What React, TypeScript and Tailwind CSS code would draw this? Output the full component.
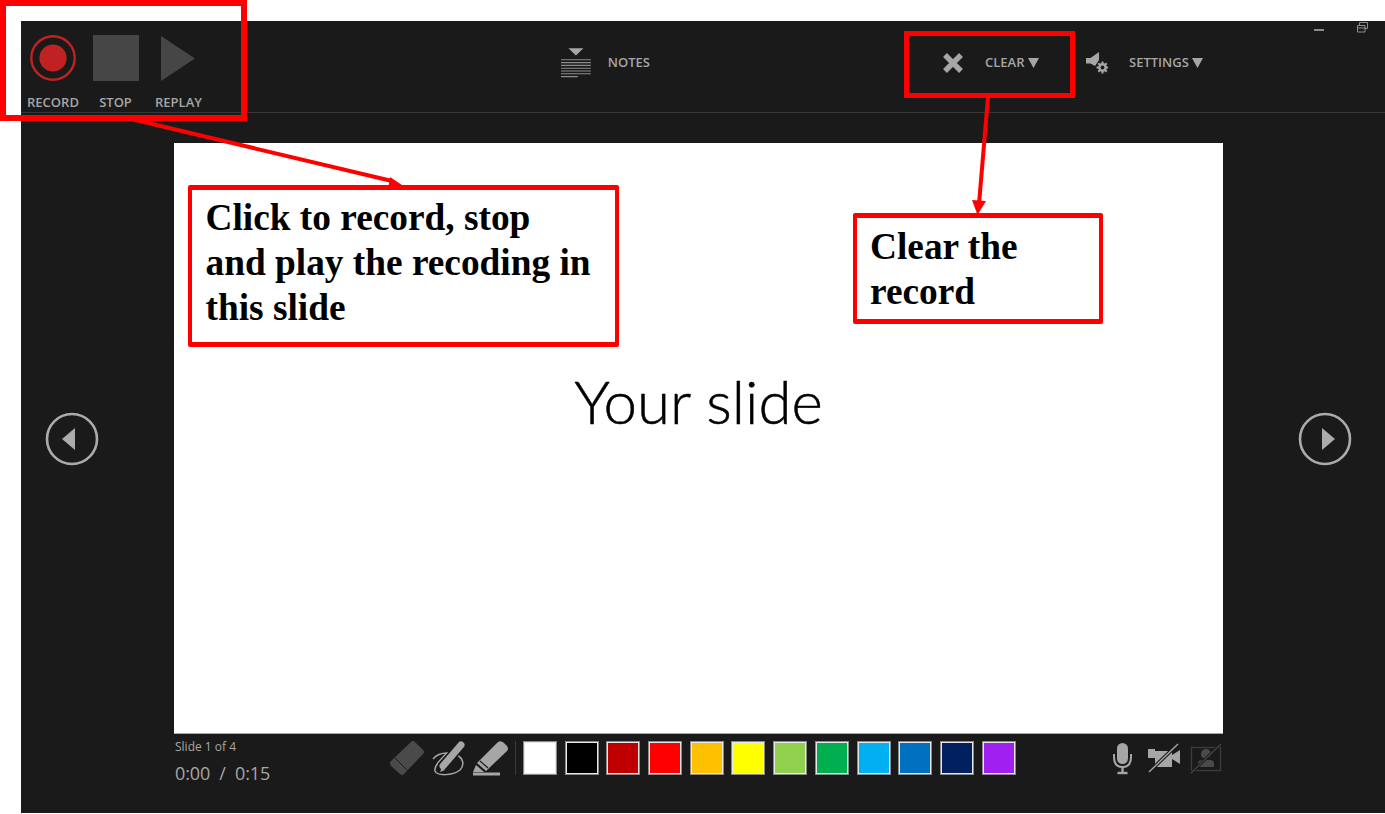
const SWATCHES = ["#ffffff","#000000","#c00000","#ff0000","#ffc000","#ffff00","#92d050","#00b050","#00b0f0","#0070c0","#002060","#a020f0"];

function ToolLabel({ children, cls = "" }: { children: React.ReactNode; cls?: string }) {
  return <span className={"text-[13px] font-semibold leading-none text-[#a6a6a6] " + cls}>{children}</span>;
}

function Caret() {
  return (
    <svg width="11" height="10" viewBox="0 0 11 10" className="ml-[3px]">
      <path d="M0 0H11L5.5 10Z" fill="#a6a6a6" />
    </svg>
  );
}

function NavButton({ dir }: { dir: "left" | "right" }) {
  return (
    <svg width="54" height="54" viewBox="0 0 54 54">
      <circle cx="27" cy="27" r="25" fill="none" stroke="#ababab" strokeWidth="2.6" />
      {dir === "left" ? <path d="M17 27L30 16V38Z" fill="#ababab" /> : <path d="M37 27L24 16V38Z" fill="#ababab" />}
    </svg>
  );
}

export default function App() {
  return (
    <div className="relative w-[1385px] h-[814px] bg-white pl-[21px] pt-[21px] pb-px overflow-hidden font-['Open_Sans',sans-serif]">
      <div className="relative h-full bg-[#1a1a1a] flex flex-col">
        {/* Top bar */}
        <header className="h-[92px] shrink-0 border-b border-[#363636] flex items-start">
          <div className="flex w-[189px] shrink-0">
            <div className="w-[63px] flex flex-col items-center pt-[14px]">
              <svg width="46" height="46" viewBox="0 0 46 46">
                <circle cx="23" cy="23" r="21.7" fill="none" stroke="#c02222" strokeWidth="2.4" />
                <circle cx="23" cy="23" r="13.6" fill="#c02222" />
              </svg>
              <ToolLabel cls="mt-[15px] ml-px">RECORD</ToolLabel>
            </div>
            <div className="w-[63px] flex flex-col items-center pt-[14px]">
              <div className="w-[46px] h-[46px] bg-[#464646]" />
              <ToolLabel cls="mt-[15px]">STOP</ToolLabel>
            </div>
            <div className="w-[63px] flex flex-col items-center pt-[14px]">
              <svg width="46" height="46" viewBox="0 0 46 46">
                <path d="M5 1L39 23.5L5 46Z" fill="#464646" />
              </svg>
              <ToolLabel cls="mt-[15px]">REPLAY</ToolLabel>
            </div>
          </div>

          <div className="ml-[351px] flex items-center h-[84px] w-[89px] shrink-0">
            <svg width="32" height="34" viewBox="0 0 32 34" className="mt-[1px]">
              <path d="M8 0H24L16 8Z" fill="#a6a6a6" />
              <g fill="none" stroke="#8c8c8c" strokeWidth="1.2">
                <path d="M0 12.5H32M0 15.5H32M0 18.5H32M0 21.5H32M0 24.5H32M0 27.5H32M0 30.5H18" />
              </g>
            </svg>
            <ToolLabel cls="ml-[17px] mb-[2px]">NOTES</ToolLabel>
          </div>

          <div className="ml-[292px] flex items-center h-[84px] w-[144px] shrink-0">
            <svg width="22" height="22" viewBox="0 0 22 22">
              <path d="M3 3L19 19M19 3L3 19" stroke="#a6a6a6" strokeWidth="5.4" fill="none" />
            </svg>
            <ToolLabel cls="ml-[21px] mr-px mb-[2px]">CLEAR</ToolLabel>
            <Caret />
          </div>

          <div className="flex items-center h-[84px]">
            <svg width="22" height="22" viewBox="0 0 22 22">
              <path d="M0 6H4.5L13 0V8L9 14L4.5 11.5H0Z" fill="#a6a6a6" />
              <path d="M16.5 9.5V21.5M10.5 15.5H22.5M12.3 11.3L20.7 19.7M20.7 11.3L12.3 19.7" stroke="#a6a6a6" strokeWidth="2" />
              <circle cx="16.5" cy="15.5" r="4.4" fill="#a6a6a6" />
              <circle cx="16.5" cy="15.5" r="1.9" fill="#1a1a1a" />
            </svg>
            <ToolLabel cls="ml-[21px] mb-[2px]">SETTINGS</ToolLabel>
            <Caret />
          </div>
        </header>

        {/* Window controls */}
        <div className="absolute top-[1px] right-[17px] flex items-start gap-[33px]">
          <div className="w-[10px] h-[2px] mt-[7px] bg-[#8c8c8c]" />
          <svg width="11" height="11" viewBox="0 0 11 11">
            <path d="M2.5 3V.5H10.5V6.5H8M.5 3.5H8V10H.5ZM.5 6H8" fill="none" stroke="#8c8c8c" />
          </svg>
        </div>

        {/* Slide stage */}
        <main className="flex items-center pt-[30px] shrink-0">
          <div className="w-[153px] flex justify-center pr-[51px] shrink-0"><NavButton dir="left" /></div>
          <div className="w-[1049px] h-[591px] bg-white border-b border-[#a8a8a8] flex items-center justify-center shrink-0">
            <span className="text-[60px] font-light leading-none text-black mb-[74px] font-['Lato',sans-serif] [-webkit-text-stroke:0.5px_black]">Your slide</span>
          </div>
          <div className="flex-1 flex justify-center pl-[41px]"><NavButton dir="right" /></div>
        </main>

        {/* Bottom bar */}
        <footer className="flex items-start pl-[153px] pt-[6px]">
          <div className="w-[216px] shrink-0 pl-px text-[#a6a6a6]">
            <div className="text-[12px] leading-[14px]">Slide 1 of 4</div>
            <div className="text-[18px] leading-[24px] mt-[7px] whitespace-pre tracking-[-0.1px]">0:00  /  0:15</div>
          </div>

          <svg width="118" height="37" viewBox="0 0 118 37" className="shrink-0">
            <path d="M1 21L21 2Q23 0 25 2L33 10Q35 12 33 14L14 34Q12 36 10 34L1 26Q-1 23 1 21Z" fill="#4a4a4a" />
            <path d="M5 18L18 31" stroke="#1a1a1a" strokeWidth="1" />
            <path d="M43 19C47 14 53 13 57 13C50 20 44 26 45 31C47 36 62 36 70 30C75 25 73 18 67 15" fill="none" stroke="#a6a6a6" strokeWidth="1.5" />
            <path d="M72 4L52 27" stroke="#1a1a1a" strokeWidth="10" />
            <path d="M71 5L53 26" stroke="#a6a6a6" strokeWidth="7" strokeLinecap="round" />
            <path d="M52 27L50 32L55 30Z" fill="#a6a6a6" />
            <path d="M108 2Q111 0 114 3L117 6Q119 9 117 11L96 31L87 23Z" fill="#a6a6a6" />
            <path d="M90 21L98 28" stroke="#1a1a1a" strokeWidth="1.2" />
            <path d="M86 25L94 32H83Z" fill="#a6a6a6" />
            <path d="M83 32.5H110V35.5H83Z" fill="#a6a6a6" />
          </svg>

          <div className="w-px h-[34px] mt-px bg-[#3a3a3a] ml-[7px] mr-[7px] shrink-0" />

          <div className="flex gap-[7.7px] mt-px shrink-0">
            {SWATCHES.map((c) => (
              <div key={c} className="w-[34px] h-[34px] border-2 border-[#e8e8e8] outline outline-1 -outline-offset-1 outline-[#8a8a8a]" style={{ backgroundColor: c }} />
            ))}
          </div>

          <svg width="110" height="36" viewBox="0 0 110 36" className="ml-[96px] shrink-0">
            <rect x="5" y="3" width="11" height="21" rx="5.5" fill="#a6a6a6" />
            <path d="M2 14V17Q2 27 10.5 27Q19 27 19 17V14" fill="none" stroke="#a6a6a6" strokeWidth="2" />
            <path d="M10.5 27V32" stroke="#a6a6a6" strokeWidth="2.4" fill="none" />
            <path d="M5.5 33H15.5" stroke="#a6a6a6" strokeWidth="2.4" fill="none" />
            <path d="M36 9H43V11H60V15L68 10V24L60 19V27H43V18H36Z" fill="#a6a6a6" />
            <path d="M37 32L66 4" stroke="#1a1a1a" strokeWidth="3.6" />
            <path d="M37 32L66 4" stroke="#a6a6a6" strokeWidth="1.4" />
            <rect x="79.5" y="7.5" width="29" height="23" fill="none" stroke="#3c3c3c" strokeWidth="1.3" />
            <circle cx="94" cy="14" r="5" fill="#4a4a4a" />
            <path d="M86 27V24Q86 20 90 20H98Q102 20 102 24V27Z" fill="#4a4a4a" />
            <path d="M79 33L109 4" stroke="#1a1a1a" strokeWidth="3" />
            <path d="M79 33L109 4" stroke="#454545" strokeWidth="1.3" />
          </svg>
        </footer>
      </div>

      {/* Annotations */}
      <div className="absolute left-0 top-0 w-[247px] h-[121px] border-[6px] border-[#ff0000]" />
      <div className="absolute left-[904px] top-[31px] w-[171px] h-[67px] border-[5px] border-[#ff0000]" />

      <svg className="absolute left-0 top-0 pointer-events-none" width="1385" height="814" viewBox="0 0 1385 814">
        <path d="M127 118L392 181" stroke="#ff0000" strokeWidth="4" fill="none" />
        <path d="M402 185L390 177L388 190Z" fill="#ff0000" />
        <path d="M988 97L979 204" stroke="#ff0000" strokeWidth="4" fill="none" />
        <path d="M977.5 215L972 200L986 201Z" fill="#ff0000" />
      </svg>

      <div className="absolute left-[188px] top-[185px] w-[431px] h-[162px] border-x-4 border-y-[5px] rounded-[2px] border-[#ff0000] bg-white pl-[13.5px] pt-[5px] font-['Liberation_Serif',serif] font-bold text-[37.33px] leading-[45px] text-black">
        Click to record, stop<br />and play the recoding in<br />this slide
      </div>
      <div className="absolute left-[853px] top-[213px] w-[250px] h-[111px] border-x-4 border-y-[5px] rounded-[2px] border-[#ff0000] bg-white pl-[13px] pt-[6px] font-['Liberation_Serif',serif] font-bold text-[37.33px] leading-[45px] text-black">
        Clear the<br />record
      </div>
    </div>
  );
}
